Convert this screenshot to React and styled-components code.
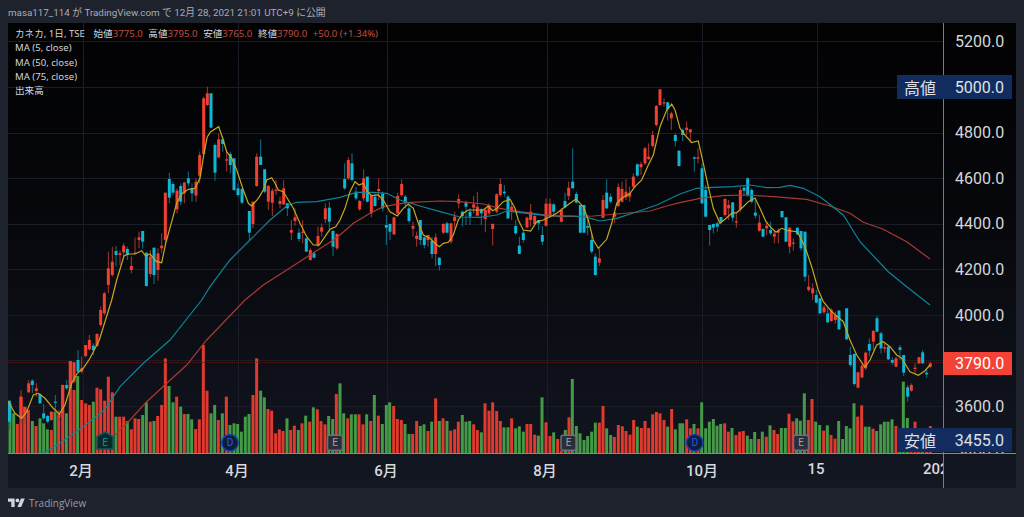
import React from "react";
import styled, { createGlobalStyle } from "styled-components";

const GlobalStyle = createGlobalStyle`
  html, body {
    margin: 0;
    padding: 0;
    background: #1e222d;
  }
`;

const colors = {
  r: "#e03a2e",
  g: "#449a47",
  up: "#f23f33",
  down: "#0fb6d6",
  upWick: "#a5382f",
  downWick: "#0e7488",
};

// values below are read off the picture in crops: x/3 + left, y/3 + top
const parseVolumes = (ox, oy, text) =>
  text
    .trim()
    .split(/\s+/)
    .map((item) => {
      const [x, y] = item.slice(1).split("/").map(Number);
      return { c: item[0], x: ox + x / 3, y: oy + y / 3 };
    });

const volumes = [
  ...parseVolumes(0, 340, `g30/190 g41/220 r52/252 r63/170 r74/200 r85/210 g97/243 r108/258 g120/235 g131/250 g142/268 r154/270 g165/215
    r176/230 r188/135 g199/220 r211/65 r222/150 g233/108 r245/180 r257/190 r268/195 g280/185 r291/143 r302/148 r314/182 r325/110 r337/157
    g348/230 r359/230 r371/230 g382/243 r394/268 r405/235 r416/237 g428/225 g439/187 r451/245 g462/243 r473/228 r485/195 r496/55 g507/138
    g519/187 r530/170 g542/200 r553/222 g564/222 g575/238 r587/267 r598/238 r610/15 r621/152 g633/220 g644/195 r655/240 g667/220 r679/170
    g690/255 g702/250 g713/252 g724/275 g736/230 g747/222 r759/165 r770/55 g782/152 g793/172 r804/207 r815/212 r827/280 r838/268 r849/273
    g861/235 r872/270 r883/257 g895/270 r906/250 g917/227 r929/245 g940/202 r952/208 r963/243 r975/253 g986/228 g998/237 r1009/162`),
  ...parseVolumes(340, 340, `g0/130 g11/220 r23/235 g34/223 g46/223 r57/223 r69/253 g80/223 r92/243 g103/165 r115/227 g127/252 g139/195
    g149/187 r161/198 r172/237 r184/240 g195/252 g207/282 r218/282 r230/243 g241/258 g252/253 r264/273 g275/245 r287/175 g298/243 r309/235
    g321/243 r332/272 r344/268 r355/245 g367/225 g378/245 g389/243 r401/253 r412/270 g424/277 r435/190 r447/212 r458/187 r470/213 r481/243
    g492/262 g504/262 r515/235 g527/265 g538/259 g550/275 r561/252 r572/252 r584/284 g595/287 g606/172 r618/247 r630/288 g641/277 r653/297
    r664/332 g676/270 r687/232 g697/117 g709/258 g720/280 g732/300 g743/288 g755/275 g766/248 r778/248 r789/198 g800/265 g812/285 r823/291
    r835/255 r847/259 r858/273 r870/284 r881/240 g892/260 r904/264 r915/243 r926/264 r938/223 r949/216 r960/220 r972/240 g983/260 r995/207
    g1006/268`),
  ...parseVolumes(680, 300, `g0/370 g8/370 r20/358 r31/385 g42/372 r54/385 g65/307 g77/385 g88/365 g100/357 g111/377 g122/372 r134/370
    r145/395 g156/384 r168/405 r179/395 r190/393 g202/407 g213/417 g224/396 r236/417 g247/395 r259/410 g270/376 r282/390 r293/402 g304/384
    g316/384 r327/341 r339/364 g350/355 g361/362 g373/280 r385/360 r396/297 g407/365 g419/375 r431/392 g442/376 r453/405 r465/416 g476/363
    g488/417 g499/378 g510/385 g522/310 r533/350 r545/316 g556/380 g567/380 r579/386 g590/393 g602/373 g613/365 g624/365 g636/358 r648/378
    g659/420 g670/245 g682/354 r693/430 r705/365 r716/430 g727/430 r740/430 r751/378`),
];

const seg = (ox, oy, rows) =>
  rows.map(([c, x, t, b, wt, wb]) => ({
    c,
    x: ox + x / 3,
    t: oy + t / 3,
    b: oy + b / 3,
    wt: oy + wt / 3,
    wb: oy + wb / 3,
  }));

const candles = [
  ...seg(0, 330, [
    ["d", 28, 212, 275, 212, 300], ["u", 63, 200, 260, 180, 280], ["u", 75, 232, 248, 230, 280], ["u", 86, 160, 187, 150, 188],
    ["d", 97, 152, 165, 148, 190], ["u", 109, 175, 183, 160, 200], ["d", 120, 192, 220, 190, 222], ["d", 131, 250, 265, 222, 270],
    ["d", 143, 258, 275, 255, 280], ["u", 154, 245, 270, 245, 272], ["d", 166, 215, 218, 195, 250], ["u", 177, 250, 262, 240, 275],
    ["u", 188, 165, 250, 163, 252], ["d", 200, 165, 175, 150, 180], ["u", 211, 93, 175, 93, 178], ["u", 222, 97, 155, 95, 160],
    ["d", 234, 90, 125, 60, 125], ["u", 245, 115, 125, 80, 130], ["u", 257, 45, 78, 45, 82], ["u", 268, 30, 58, 15, 60],
    ["d", 280, 47, 60, 40, 75], ["u", 291, 12, 48, 10, 50], ["u", 302, -60, -15, -70, -10], ["u", 313, -110, -50, -115, -45],
  ]),
  ...seg(0, 80, [
    ["u", 325, 565, 615, 515, 640], ["u", 337, 545, 585, 500, 590], ["d", 348, 513, 525, 498, 560], ["u", 360, 520, 525, 512, 555],
    ["u", 371, 497, 517, 490, 530], ["d", 382, 507, 525, 500, 540], ["u", 394, 558, 570, 530, 580], ["u", 405, 518, 521, 473, 520],
    ["u", 417, 472, 480, 455, 505], ["d", 428, 453, 485, 453, 505], ["d", 439, 518, 618, 518, 620], ["u", 451, 530, 582, 510, 590],
    ["d", 462, 503, 585, 503, 612], ["u", 474, 520, 570, 505, 602], ["u", 485, 497, 505, 460, 520], ["u", 496, 338, 480, 338, 490],
    ["d", 508, 297, 353, 278, 370], ["d", 519, 312, 338, 305, 345], ["u", 531, 332, 388, 325, 400], ["d", 542, 318, 365, 310, 375],
    ["u", 553, 308, 340, 305, 370], ["d", 565, 295, 310, 275, 320], ["d", 576, 325, 340, 310, 365], ["u", 588, 305, 347, 295, 365],
    ["u", 599, 225, 287, 215, 310], ["u", 611, 55, 222, 50, 225], ["u", 622, 40, 75, 20, 78], ["d", 633, 40, 143, 40, 145],
    ["d", 645, 195, 278, 190, 302], ["u", 656, 178, 232, 160, 235], ["d", 668, 178, 192, 170, 215], ["u", 680, 238, 242, 215, 275],
    ["d", 691, 222, 255, 215, 280], ["d", 702, 235, 330, 235, 332], ["d", 714, 325, 345, 310, 350], ["d", 726, 327, 368, 325, 372],
    ["d", 748, 393, 458, 393, 483], ["u", 759, 365, 432, 365, 445], ["u", 770, 230, 318, 220, 320], ["d", 782, 230, 255, 178, 255],
    ["d", 794, 268, 335, 268, 340], ["u", 805, 318, 365, 315, 390], ["u", 817, 332, 368, 325, 408], ["u", 828, 329, 332, 300, 345],
    ["u", 840, 363, 372, 350, 385], ["u", 851, 325, 373, 300, 375], ["d", 862, 370, 385, 370, 408], ["u", 874, 450, 458, 420, 480],
    ["u", 885, 412, 423, 385, 437], ["d", 897, 458, 477, 445, 485], ["u", 908, 455, 458, 420, 490], ["d", 919, 475, 515, 475, 515],
    ["u", 931, 510, 540, 505, 542], ["d", 942, 520, 533, 515, 535], ["u", 954, 468, 497, 440, 500], ["u", 965, 442, 455, 430, 470],
    ["u", 976, 385, 418, 370, 430], ["d", 988, 383, 425, 365, 448], ["d", 999, 453, 500, 450, 528], ["u", 1011, 462, 505, 460, 510],
  ]),
  ...seg(340, 80, [
    ["d", 14, 297, 325, 250, 330], ["u", 25, 240, 295, 232, 300], ["d", 36, 250, 300, 220, 305], ["d", 48, 335, 355, 320, 360],
    ["u", 59, 363, 388, 360, 392], ["u", 71, 295, 355, 268, 362], ["d", 82, 290, 365, 290, 367], ["u", 94, 345, 400, 345, 412],
    ["d", 105, 350, 378, 340, 380], ["u", 116, 327, 333, 295, 360], ["d", 128, 340, 385, 335, 395], ["d", 139, 435, 443, 405, 495],
    ["d", 150, 432, 455, 430, 480], ["u", 162, 412, 463, 410, 465], ["u", 173, 348, 400, 338, 405], ["u", 185, 312, 345, 298, 350],
    ["d", 196, 350, 370, 345, 385], ["d", 207, 385, 423, 375, 428], ["u", 219, 438, 446, 425, 470], ["u", 230, 467, 477, 455, 500],
    ["d", 241, 420, 480, 420, 495], ["d", 253, 472, 495, 470, 505], ["u", 264, 465, 480, 465, 500], ["d", 276, 482, 522, 470, 535],
    ["u", 287, 472, 522, 460, 558], ["d", 298, 533, 555, 533, 572], ["u", 310, 432, 458, 430, 462], ["d", 321, 430, 458, 425, 460],
    ["u", 333, 430, 485, 430, 490], ["u", 344, 410, 423, 395, 445], ["u", 356, 357, 370, 343, 385], ["d", 367, 395, 408, 392, 440],
    ["d", 378, 368, 380, 362, 435], ["d", 390, 395, 410, 385, 435], ["u", 401, 373, 383, 348, 400], ["u", 412, 380, 407, 335, 410],
    ["d", 424, 388, 400, 385, 435], ["u", 436, 390, 417, 385, 457], ["u", 447, 375, 400, 370, 405], ["u", 458, 432, 447, 430, 497],
    ["u", 470, 343, 395, 340, 400], ["u", 481, 312, 345, 295, 350], ["d", 493, 335, 340, 315, 350], ["d", 504, 350, 415, 345, 418],
    ["u", 515, 380, 395, 365, 420], ["d", 527, 438, 460, 420, 465], ["d", 538, 497, 522, 470, 522], ["d", 550, 458, 480, 450, 488],
    ["u", 561, 413, 442, 410, 445], ["u", 572, 395, 420, 372, 440], ["u", 584, 408, 432, 405, 435], ["d", 596, 420, 430, 420, 450],
    ["d", 607, 465, 485, 438, 495], ["u", 618, 371, 437, 355, 440], ["u", 630, 371, 410, 355, 412], ["d", 641, 373, 395, 370, 412],
    ["u", 664, 390, 425, 385, 428], ["d", 675, 363, 382, 338, 385], ["u", 686, 323, 348, 305, 360], ["d", 698, 305, 325, 205, 325],
    ["d", 709, 342, 368, 335, 370], ["d", 721, 375, 458, 375, 460], ["d", 732, 375, 458, 375, 460], ["d", 743, 438, 443, 405, 465],
    ["d", 755, 480, 515, 465, 520], ["d", 766, 530, 585, 520, 587], ["u", 778, 535, 548, 505, 558], ["u", 789, 360, 413, 345, 415],
    ["d", 800, 338, 385, 298, 388], ["d", 812, 350, 365, 340, 370], ["u", 824, 398, 410, 395, 430], ["u", 835, 322, 378, 310, 380],
    ["u", 846, 327, 365, 305, 368], ["u", 858, 335, 352, 298, 360], ["u", 869, 340, 350, 320, 365], ["u", 880, 290, 320, 280, 325],
    ["d", 892, 253, 287, 250, 290], ["u", 903, 252, 262, 245, 285], ["u", 915, 205, 250, 200, 255], ["u", 926, 230, 237, 190, 240],
    ["u", 938, 165, 198, 152, 202], ["u", 949, 78, 135, 75, 140], ["u", 960, 28, 75, 28, 78], ["u", 972, 67, 69, 55, 80],
    ["d", 983, 67, 88, 65, 122], ["u", 994, 100, 115, 95, 150], ["d", 1006, 165, 183, 160, 200], ["d", 1017, 212, 258, 212, 260],
  ]),
  ...seg(680, 80, [
    ["d", 8, 150, 165, 145, 183], ["u", 20, 143, 150, 125, 165], ["u", 31, 148, 157, 148, 188], ["d", 43, 232, 236, 230, 275],
    ["u", 54, 232, 236, 205, 250], ["d", 66, 265, 370, 250, 372], ["d", 77, 330, 410, 315, 412], ["d", 89, 435, 450, 435, 497],
    ["d", 100, 432, 443, 432, 460], ["d", 112, 430, 440, 425, 455], ["d", 123, 411, 425, 411, 432], ["u", 135, 357, 405, 355, 410],
    ["u", 146, 375, 385, 360, 420], ["d", 158, 367, 413, 367, 425], ["u", 169, 424, 427, 395, 443], ["u", 181, 330, 388, 320, 395],
    ["d", 192, 323, 332, 315, 345], ["d", 203, 295, 345, 292, 350], ["d", 215, 330, 365, 325, 370], ["d", 226, 398, 407, 355, 415],
    ["u", 238, 428, 452, 405, 455], ["d", 249, 447, 470, 445, 472], ["u", 260, 437, 445, 425, 465], ["d", 272, 450, 460, 425, 465],
    ["u", 283, 461, 470, 450, 490], ["u", 295, 452, 458, 445, 490], ["d", 306, 393, 412, 393, 412], ["d", 318, 412, 485, 412, 485],
    ["u", 329, 443, 500, 443, 520], ["u", 340, 488, 490, 475, 512], ["d", 352, 443, 463, 443, 465], ["d", 363, 453, 505, 453, 512],
    ["d", 375, 455, 590, 455, 605], ["u", 386, 620, 630, 585, 635], ["u", 398, 625, 640, 610, 660], ["d", 409, 645, 668, 630, 670],
  ]),
  ...seg(680, 300, [
    ["d", 420, -5, 40, -5, 42], ["u", 432, 22, 37, 15, 42], ["d", 443, 40, 67, 25, 68], ["u", 454, 30, 63, 25, 65],
    ["u", 466, 45, 60, 35, 70], ["d", 477, 32, 88, 30, 90], ["d", 500, 25, 118, 25, 120], ["d", 511, 165, 195, 140, 200],
    ["d", 523, 162, 252, 160, 257], ["u", 534, 217, 263, 215, 265], ["u", 546, 197, 232, 190, 235], ["u", 557, 158, 205, 155, 210],
    ["d", 568, 132, 152, 115, 170], ["u", 580, 93, 125, 90, 150], ["d", 591, 55, 95, 48, 97], ["d", 603, 100, 145, 95, 160],
    ["u", 614, 142, 146, 130, 158], ["d", 625, 140, 178, 135, 180], ["d", 637, 180, 188, 172, 195], ["u", 648, 175, 200, 170, 202],
    ["d", 660, 142, 150, 135, 180], ["d", 671, 165, 218, 165, 228], ["d", 683, 262, 290, 255, 305], ["u", 694, 255, 272, 250, 275],
    ["u", 705, 203, 207, 190, 222], ["u", 717, 172, 190, 170, 192], ["d", 728, 157, 190, 150, 192], ["d", 740, 218, 223, 210, 233],
    ["u", 751, 190, 200, 185, 205],
  ]),
];

const toPath = (parts) =>
  parts
    .flatMap(([ox, oy, pts]) => pts.map(([x, y]) => `${(ox + x / 3).toFixed(1)},${(oy + y / 3).toFixed(1)}`))
    .join(" ");

const ma5 = toPath([
  [0, 340, [[25, 185], [45, 220], [65, 235], [80, 215], [100, 165], [115, 160], [135, 175], [160, 205], [178, 222], [195, 195], [215, 130], [232, 100], [250, 85], [270, 55], [298, 0]]],
  [0, 80, [[335, 660], [350, 600], [372, 528], [385, 522], [405, 522], [425, 512], [437, 528], [450, 522], [470, 545], [485, 548], [497, 490], [515, 425], [530, 370], [545, 342], [565, 328], [585, 325], [600, 295], [612, 220], [622, 170], [632, 155], [656, 140], [668, 175], [680, 215], [695, 235], [710, 270], [730, 330], [745, 370], [755, 378], [775, 355], [790, 330], [800, 300], [815, 293], [825, 310], [835, 330], [850, 335], [865, 360], [880, 385], [900, 430], [920, 470], [940, 495], [958, 495], [975, 470], [990, 448], [1007, 440]]],
  [340, 80, [[0, 420], [15, 385], [30, 335], [45, 305], [57, 315], [70, 310], [82, 335], [95, 347], [115, 345], [130, 360], [150, 395], [172, 408], [190, 385], [205, 372], [220, 385], [235, 430], [250, 465], [270, 475], [285, 490], [298, 500], [310, 490], [325, 487], [340, 465], [355, 420], [370, 400], [385, 390], [410, 390], [430, 390], [445, 378], [458, 392], [470, 385], [490, 365], [510, 358], [525, 385], [535, 420], [550, 450], [572, 453], [590, 425], [610, 420], [630, 410], [650, 400], [670, 385], [690, 370], [708, 357], [730, 380], [745, 420], [760, 480], [775, 505], [800, 478], [815, 430], [830, 370], [845, 355], [870, 340], [885, 320], [905, 300], [925, 255], [940, 225], [960, 140], [980, 90], [995, 72], [1005, 90]]],
  [680, 80, [[0, 145], [15, 165], [35, 188], [55, 183], [70, 250], [85, 320], [100, 385], [120, 430], [135, 418], [155, 400], [170, 398], [190, 380], [205, 365], [225, 354], [240, 385], [258, 425], [275, 445], [288, 457], [305, 445], [325, 452], [352, 455], [375, 500], [395, 560], [415, 630], [430, 665]]],
  [680, 300, [[455, 35], [490, 65], [510, 120], [530, 165], [555, 202], [570, 180], [590, 135], [610, 125], [630, 140], [650, 165], [665, 175], [690, 215], [715, 226], [735, 212], [750, 195]]],
]);

const ma50 = toPath([
  [0, 340, [[130, 340], [180, 310], [250, 260], [315, 208], [360, 140], [430, 70], [510, 0]]],
  [0, 80, [[605, 660], [630, 620], [690, 540], [750, 480], [810, 420], [860, 378], [890, 367], [950, 365]]],
  [340, 80, [[0, 352], [50, 337], [100, 337], [140, 340], [180, 360], [240, 378], [300, 395], [360, 411], [420, 412], [470, 405], [500, 393], [560, 400], [620, 407], [700, 408], [740, 412], [780, 423], [830, 415], [900, 392], [950, 375]]],
  [680, 80, [[0, 342], [50, 325], [100, 322], [160, 320], [210, 315], [260, 323], [300, 322], [330, 316], [370, 325], [420, 350], [490, 405], [540, 485], [625, 575], [680, 620], [750, 675]]],
]);

const ma75 = toPath([
  [0, 340, [[345, 285], [390, 240], [440, 185], [500, 130], [560, 75], [620, 0]]],
  [0, 80, [[735, 660], [790, 615], [860, 570], [930, 525], [1000, 480]]],
  [340, 80, [[0, 465], [40, 430], [90, 400], [130, 380], [200, 368], [300, 363], [360, 365], [430, 372], [480, 385], [540, 395], [600, 403], [660, 410], [760, 408], [830, 402], [930, 393], [980, 378]]],
  [680, 80, [[0, 368], [60, 355], [130, 347], [200, 345], [280, 350], [380, 358], [450, 378], [510, 400], [550, 427], [610, 448], [680, 485], [750, 537]]],
]);

// 3800.0 sits under the last-price tag, so that slot stays empty
const prices = ["5200.0", "5000.0", "4800.0", "4600.0", "4400.0", "4200.0", "4000.0", "", "3600.0", "3400.0"];
const gridY = [41, 87, 133, 178, 224, 269, 315, 360, 406];
const gridX = [83, 238, 387, 547, 702, 817];
const ticks = [
  { label: "2月", w: 146 },
  { label: "4月", w: 166 },
  { label: "6月", w: 132 },
  { label: "8月", w: 186 },
  { label: "10月", w: 128 },
  { label: "15", w: 100 },
  { label: "2021", w: 148 },
];
const ohlc = [
  ["始値", "3775.0"],
  ["高値", "3795.0"],
  ["安値", "3765.0"],
  ["終値", "3790.0"],
];

const Page = styled.div`
  width: 1024px;
  height: 517px;
  display: flex;
  flex-direction: column;
  background: #1e222d;
  overflow: hidden;
  font-family: "Noto Sans", "Noto Sans CJK JP", sans-serif;
`;

const Header = styled.div`
  height: 23px;
  padding-left: 8px;
  display: flex;
  align-items: center;
  font-family: Roboto, "Noto Sans CJK JP", sans-serif;
  font-size: 9.8px;
  color: #a9acb5;
  white-space: nowrap;
`;

const Panel = styled.div`
  position: relative;
  margin-left: 8px;
  width: 1008px;
  height: 465px;
  display: grid;
  grid-template-columns: 936px 72px;
  grid-template-rows: 430px 35px;
  background: linear-gradient(180deg, #020203 0%, #06070b 40%, #131722 100%);
  overflow: hidden;
`;

const Plot = styled.svg`
  display: block;
  width: 936px;
  height: 430px;
`;

const PriceAxis = styled.div`
  border-left: 1px solid #787b86;
  margin-left: -1px;
  padding: 9px 0 0 11px;
  display: flex;
  flex-direction: column;
  gap: 25.6px;
  overflow: hidden;
`;

const PriceLabel = styled.div`
  height: 20px;
  flex: none;
  line-height: 20px;
  font-family: Roboto, sans-serif;
  font-size: 16px;
  color: #d6d7db;
`;

const TimeAxis = styled.div`
  border-top: 1px solid #858892;
  display: flex;
  align-items: center;
  overflow: hidden;
  padding-bottom: 4px;
  box-sizing: border-box;
`;

const TimeLabel = styled.div`
  flex: none;
  width: ${({ $w }) => $w}px;
  text-align: center;
  font-family: Roboto, "Noto Sans CJK JP", sans-serif;
  font-size: 15px;
  font-weight: 500;
  color: #d8d9dc;
`;

const AxisCorner = styled.div`
  border-top: 1px solid #858892;
  border-left: 1px solid #787b86;
  margin-left: -1px;
`;

const Legend = styled.div`
  position: absolute;
  left: 7px;
  top: 4px;
  display: flex;
  flex-direction: column;
  font-size: 9.6px;
  line-height: 14.3px;
  color: #d1d4dc;
  white-space: nowrap;
`;

const LegendTitle = styled.div`
  display: flex;
  gap: 5.6px;
`;

const TitleName = styled.span`
  margin-right: 3px;
`;

const Ohlc = styled.span`
  color: #d1d4dc;
`;

const OhlcValue = styled.span`
  color: #c44a40;
`;

const Badge = styled.div`
  position: absolute;
  right: 4px;
  top: ${({ $top }) => $top}px;
  width: 115px;
  height: 24px;
  box-sizing: border-box;
  padding: 0 8px 0 7px;
  display: flex;
  align-items: center;
  justify-content: space-between;
  background: #132c60;
  color: #dfe1e6;
  font-family: Roboto, "Noto Sans CJK JP", sans-serif;
  font-size: 16px;
`;

const LastPrice = styled.div`
  position: absolute;
  right: 4px;
  top: 329px;
  width: 68px;
  height: 23px;
  box-sizing: border-box;
  padding-left: 11px;
  display: flex;
  align-items: center;
  background: #f44336;
  color: #fff;
  font-family: Roboto, sans-serif;
  font-size: 16px;
`;

const Footer = styled.div`
  flex: 1;
  padding-left: 8px;
  display: flex;
  align-items: center;
  gap: 4px;
  color: #9a9da6;
  font-family: "Open Sans", sans-serif;
  font-size: 10px;
`;

const Logo = () => (
  <svg width="17" height="9" viewBox="0 0 36 19" fill="#d1d4dc">
    <path d="M14 19H7V8H0V1h14v18z" />
    <path d="M28 19h-8L27.5 1h8L28 19z" />
    <circle cx="20" cy="5" r="4" />
  </svg>
);

const Earnings = ({ x, y }) => (
  <g>
    <rect x={x - 7.5} y={y - 7.5} width="15" height="15" rx="2" fill="#2a2e39" stroke="#6d707a" strokeWidth="1.5" />
    <text x={x} y={y + 3.5} textAnchor="middle" fontSize="10" fontFamily="Roboto, sans-serif" fill="#a0a3ab">E</text>
  </g>
);

const Dividend = ({ x, y }) => (
  <g>
    <circle cx={x} cy={y} r="8.2" fill="#0c1c3f" stroke="#1c3fa6" strokeWidth="1.5" />
    <text x={x} y={y + 3.6} textAnchor="middle" fontSize="10" fontFamily="Roboto, sans-serif" fill="#2c5ad8">D</text>
  </g>
);

const NextEarnings = ({ x, y }) => (
  <g>
    <path
      d={`M${x} ${y - 10}l8 4.5v12.5h-16v-12.5z`}
      fill="#052a2b"
      stroke="#0c5a59"
      strokeWidth="1.5"
    />
    <text x={x} y={y + 4} textAnchor="middle" fontSize="10" fontFamily="Roboto, sans-serif" fill="#12908c">E</text>
  </g>
);

const Chart = () => (
  <Plot viewBox="8 23 936 430">
    {gridY.map((y) => (
      <line key={y} x1="8" x2="944" y1={y + 0.5} y2={y + 0.5} stroke="#1a1d27" />
    ))}
    {gridX.map((x) => (
      <line key={x} x1={x + 0.5} x2={x + 0.5} y1="23" y2="453" stroke="#1a1d27" />
    ))}
    {volumes.map((v, i) => (
      <rect key={i} x={v.x - 1.5} y={v.y} width="3" height={453 - v.y} fill={colors[v.c]} />
    ))}
    <line x1="8" x2="944" y1="362.5" y2="362.5" stroke="#561c1c" strokeDasharray="1 1" />
    {candles.map((k, i) => (
      <g key={i}>
        <line
          x1={k.x}
          x2={k.x}
          y1={k.wt}
          y2={k.wb}
          stroke={k.c === "u" ? colors.upWick : colors.downWick}
          strokeWidth="1"
        />
        <rect
          x={k.x - 1.5}
          y={k.t}
          width="3"
          height={Math.max(k.b - k.t, 1.2)}
          fill={k.c === "u" ? colors.up : colors.down}
        />
      </g>
    ))}
    <polyline points={ma75} fill="none" stroke="#a83a32" strokeWidth="1.2" />
    <polyline points={ma50} fill="none" stroke="#0f8397" strokeWidth="1.2" />
    <polyline points={ma5} fill="none" stroke="#c4a91f" strokeWidth="1.2" />
    <NextEarnings x={105} y={442} />
    <Dividend x={230} y={442.7} />
    <Earnings x={335} y={442.7} />
    <Earnings x={568.5} y={442.7} />
    <Dividend x={694.7} y={442.7} />
    <Earnings x={801} y={442.7} />
  </Plot>
);

export default function App() {
  return (
    <Page>
      <GlobalStyle />
      <Header>masa117_114 が TradingView.com で 12月 28, 2021 21:01 UTC+9 に公開</Header>
      <Panel>
        <Chart />
        <PriceAxis>
          {prices.map((p, i) => (
            <PriceLabel key={i}>{p}</PriceLabel>
          ))}
        </PriceAxis>
        <TimeAxis>
          {ticks.map((t) => (
            <TimeLabel key={t.label} $w={t.w}>{t.label}</TimeLabel>
          ))}
        </TimeAxis>
        <AxisCorner />
        <Legend>
          <LegendTitle>
            <TitleName>カネカ, 1日, TSE</TitleName>
            {ohlc.map(([name, value]) => (
              <Ohlc key={name}>
                {name}
                <OhlcValue>{value}</OhlcValue>
              </Ohlc>
            ))}
            <OhlcValue>+50.0 (+1.34%)</OhlcValue>
          </LegendTitle>
          <div>MA (5, close)</div>
          <div>MA (50, close)</div>
          <div>MA (75, close)</div>
          <div>出来高</div>
        </Legend>
        <Badge $top={52}>
          <span>高値</span>
          <span>5000.0</span>
        </Badge>
        <LastPrice>3790.0</LastPrice>
        <Badge $top={405}>
          <span>安値</span>
          <span>3455.0</span>
        </Badge>
      </Panel>
      <Footer>
        <Logo />
        TradingView
      </Footer>
    </Page>
  );
}
